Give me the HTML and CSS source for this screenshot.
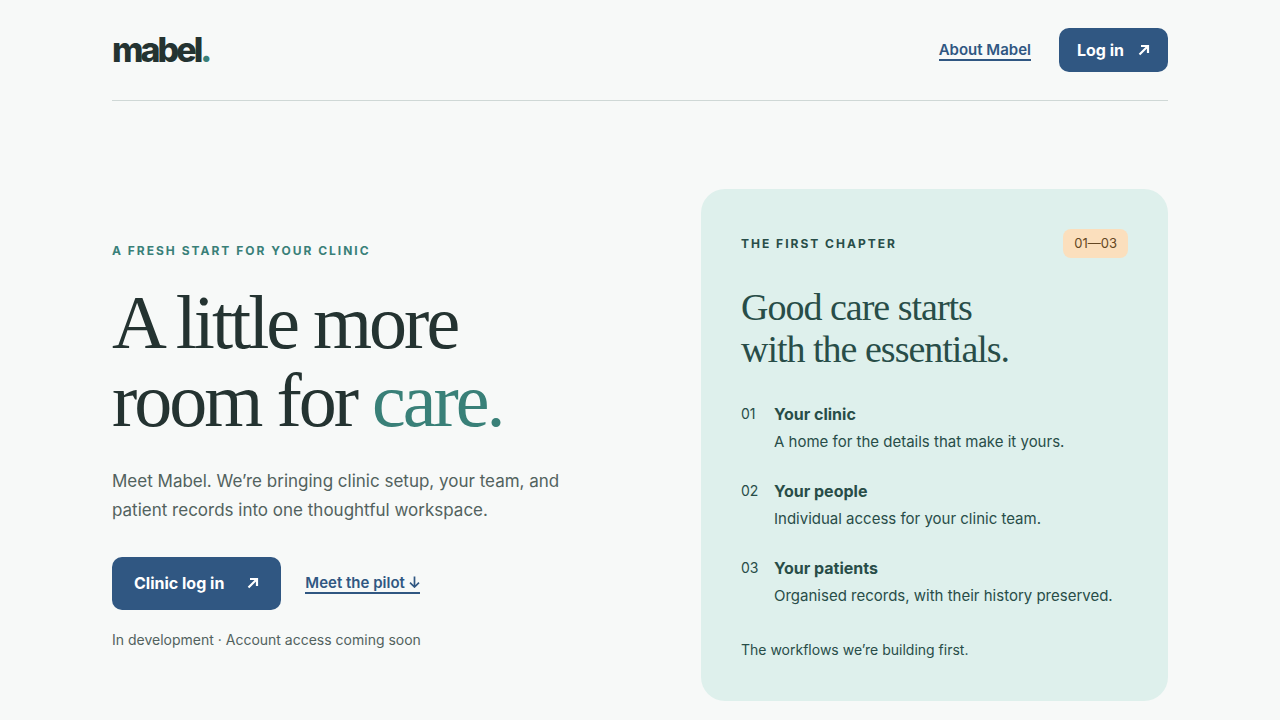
FILE: index.html
```html
<!DOCTYPE html>
<html lang="en">
<head>
    <meta charset="UTF-8">
    <meta name="viewport" content="width=device-width, initial-scale=1.0">
    <title>Mabel</title>
    <link rel="stylesheet" href="styles.css">
</head>
<body>
    <div class="container">
        <header class="header">
            <a href="#" class="logo">mabel<span class="logo-dot">.</span></a>
            <nav class="nav">
                <a href="#about" class="text-link">About Mabel</a>
                <a href="#login" class="button button-small">Log in
                    <svg class="arrow" viewBox="0 0 12 12" aria-hidden="true"><path d="M1.500 10.500 10 2M3 2H10V9"/></svg>
                </a>
            </nav>
        </header>
        <main class="hero">
            <section class="intro">
                <p class="eyebrow">A FRESH START FOR YOUR CLINIC</p>
                <h1>A little more<br>room for <span class="accent">care.</span></h1>
                <p class="lead">Meet Mabel. We’re bringing clinic setup, your team, and patient records into one thoughtful workspace.</p>
                <div class="actions">
                    <a href="#login" class="button button-large">Clinic log in
                        <svg class="arrow" viewBox="0 0 12 12" aria-hidden="true"><path d="M1.500 10.500 10 2M3 2H10V9"/></svg>
                    </a>
                    <a href="#chapter" class="text-link">Meet the pilot
                        <svg class="arrow-down" viewBox="0 0 11 12" aria-hidden="true"><path d="M5.500 .5V11M1 6.700 5.500 11 10 6.700"/></svg></a>
                </div>
                <p class="note">In development · Account access coming soon</p>
            </section>
            <section class="card" id="chapter">
                <div class="card-top">
                    <p class="card-label">THE FIRST CHAPTER</p>
                    <span class="badge">01—03</span>
                </div>
                <h2>Good care starts<br>with the essentials.</h2>
                <ol class="steps">
                    <li class="step">
                        <span class="step-number">01</span>
                        <div>
                            <h3>Your clinic</h3>
                            <p>A home for the details that make it yours.</p>
                        </div>
                    </li>
                    <li class="step">
                        <span class="step-number">02</span>
                        <div>
                            <h3>Your people</h3>
                            <p>Individual access for your clinic team.</p>
                        </div>
                    </li>
                    <li class="step">
                        <span class="step-number">03</span>
                        <div>
                            <h3>Your patients</h3>
                            <p>Organised records, with their history preserved.</p>
                        </div>
                    </li>
                </ol>
                <p class="card-note">The workflows we’re building first.</p>
            </section>
        </main>
    </div>
</body>
</html>
```
FILE: styles.css
```css
* {
    box-sizing: border-box;
}

body {
    margin: 0;
    background-color: #f7f9f8;
    color: #243331;
    font-family: Inter, "Liberation Sans", sans-serif;
}

h1, h2, h3, p, ol {
    margin: 0;
}

.container {
    max-width: 1104px;
    margin: 0 auto;
    padding: 0 24px;
}

.header {
    display: flex;
    justify-content: space-between;
    align-items: center;
    padding: 28px 0;
    border-bottom: 1px solid #cfd8d6;
}

.logo {
    color: #243331;
    font-size: 34px;
    font-weight: 800;
    line-height: 44px;
    letter-spacing: -3px;
    text-decoration: none;
}

.logo-dot,
.accent {
    color: #398078;
}

.nav {
    display: flex;
    align-items: center;
    gap: 28px;
}

.text-link {
    padding-top: 2px;
    color: #305782;
    font-size: 15px;
    font-weight: 600;
    line-height: 18px;
    text-decoration: none;
    border-bottom: 2px solid #305782;
}

.button {
    display: flex;
    align-items: center;
    color: #fff;
    background-color: #305782;
    border-radius: 10px;
    font-size: 16px;
    font-weight: 700;
    line-height: 24px;
    text-decoration: none;
}

.button-small {
    gap: 14px;
    padding: 10px 18px;
}

.button-large {
    gap: 23px;
    padding: 14px 22px;
    line-height: 25px;
}

.arrow {
    width: 12px;
    height: 12px;
    fill: none;
    stroke: currentColor;
    stroke-width: 2.2;
}

.arrow-down {
    width: 11px;
    height: 12px;
    fill: none;
    stroke: currentColor;
    stroke-width: 1.7;
}

.hero {
    display: grid;
    grid-template-columns: 1.09fr 1fr;
    gap: 80px;
    align-items: center;
    padding: 88px 0 19px;
}

.eyebrow {
    color: #398078;
    font-size: 12px;
    font-weight: 700;
    line-height: 20px;
    letter-spacing: 2px;
}

h1 {
    margin-top: 22px;
    font-family: Georgia, "Liberation Serif", serif;
    font-size: 76px;
    font-weight: 400;
    line-height: 78px;
    letter-spacing: -3px;
}

.lead {
    max-width: 480px;
    margin-top: 28px;
    color: #52625e;
    font-size: 17px;
    line-height: 29px;
}

.actions {
    display: flex;
    align-items: center;
    gap: 24px;
    margin-top: 32px;
}

.note {
    margin-top: 20px;
    color: #52625e;
    font-size: 14px;
    line-height: 20px;
}

.card {
    padding: 40px;
    background-color: #def0ec;
    border-radius: 24px;
    color: #284d48;
}

.card-top {
    display: flex;
    justify-content: space-between;
    align-items: center;
}

.card-label {
    font-size: 12px;
    font-weight: 700;
    line-height: 20px;
    letter-spacing: 2px;
}

.badge {
    padding: 4px 11px;
    background-color: #fbdfbd;
    border-radius: 8px;
    color: #644723;
    font-size: 13px;
    line-height: 21px;
}

h2 {
    margin-top: 28px;
    font-family: Georgia, "Liberation Serif", serif;
    font-size: 38px;
    font-weight: 400;
    line-height: 42px;
    letter-spacing: -1px;
}

.steps {
    display: grid;
    gap: 22px;
    margin-top: 30px;
    padding: 0;
    list-style: none;
}

.step {
    display: grid;
    grid-template-columns: 18px 1fr;
    gap: 15px;
}

.step-number {
    font-size: 14px;
    line-height: 28px;
}

.step h3 {
    font-size: 16px;
    font-weight: 700;
    line-height: 28px;
}

.step p {
    font-size: 15px;
    line-height: 27px;
}

.card-note {
    margin-top: 30px;
    font-size: 14px;
    line-height: 22px;
}
```
